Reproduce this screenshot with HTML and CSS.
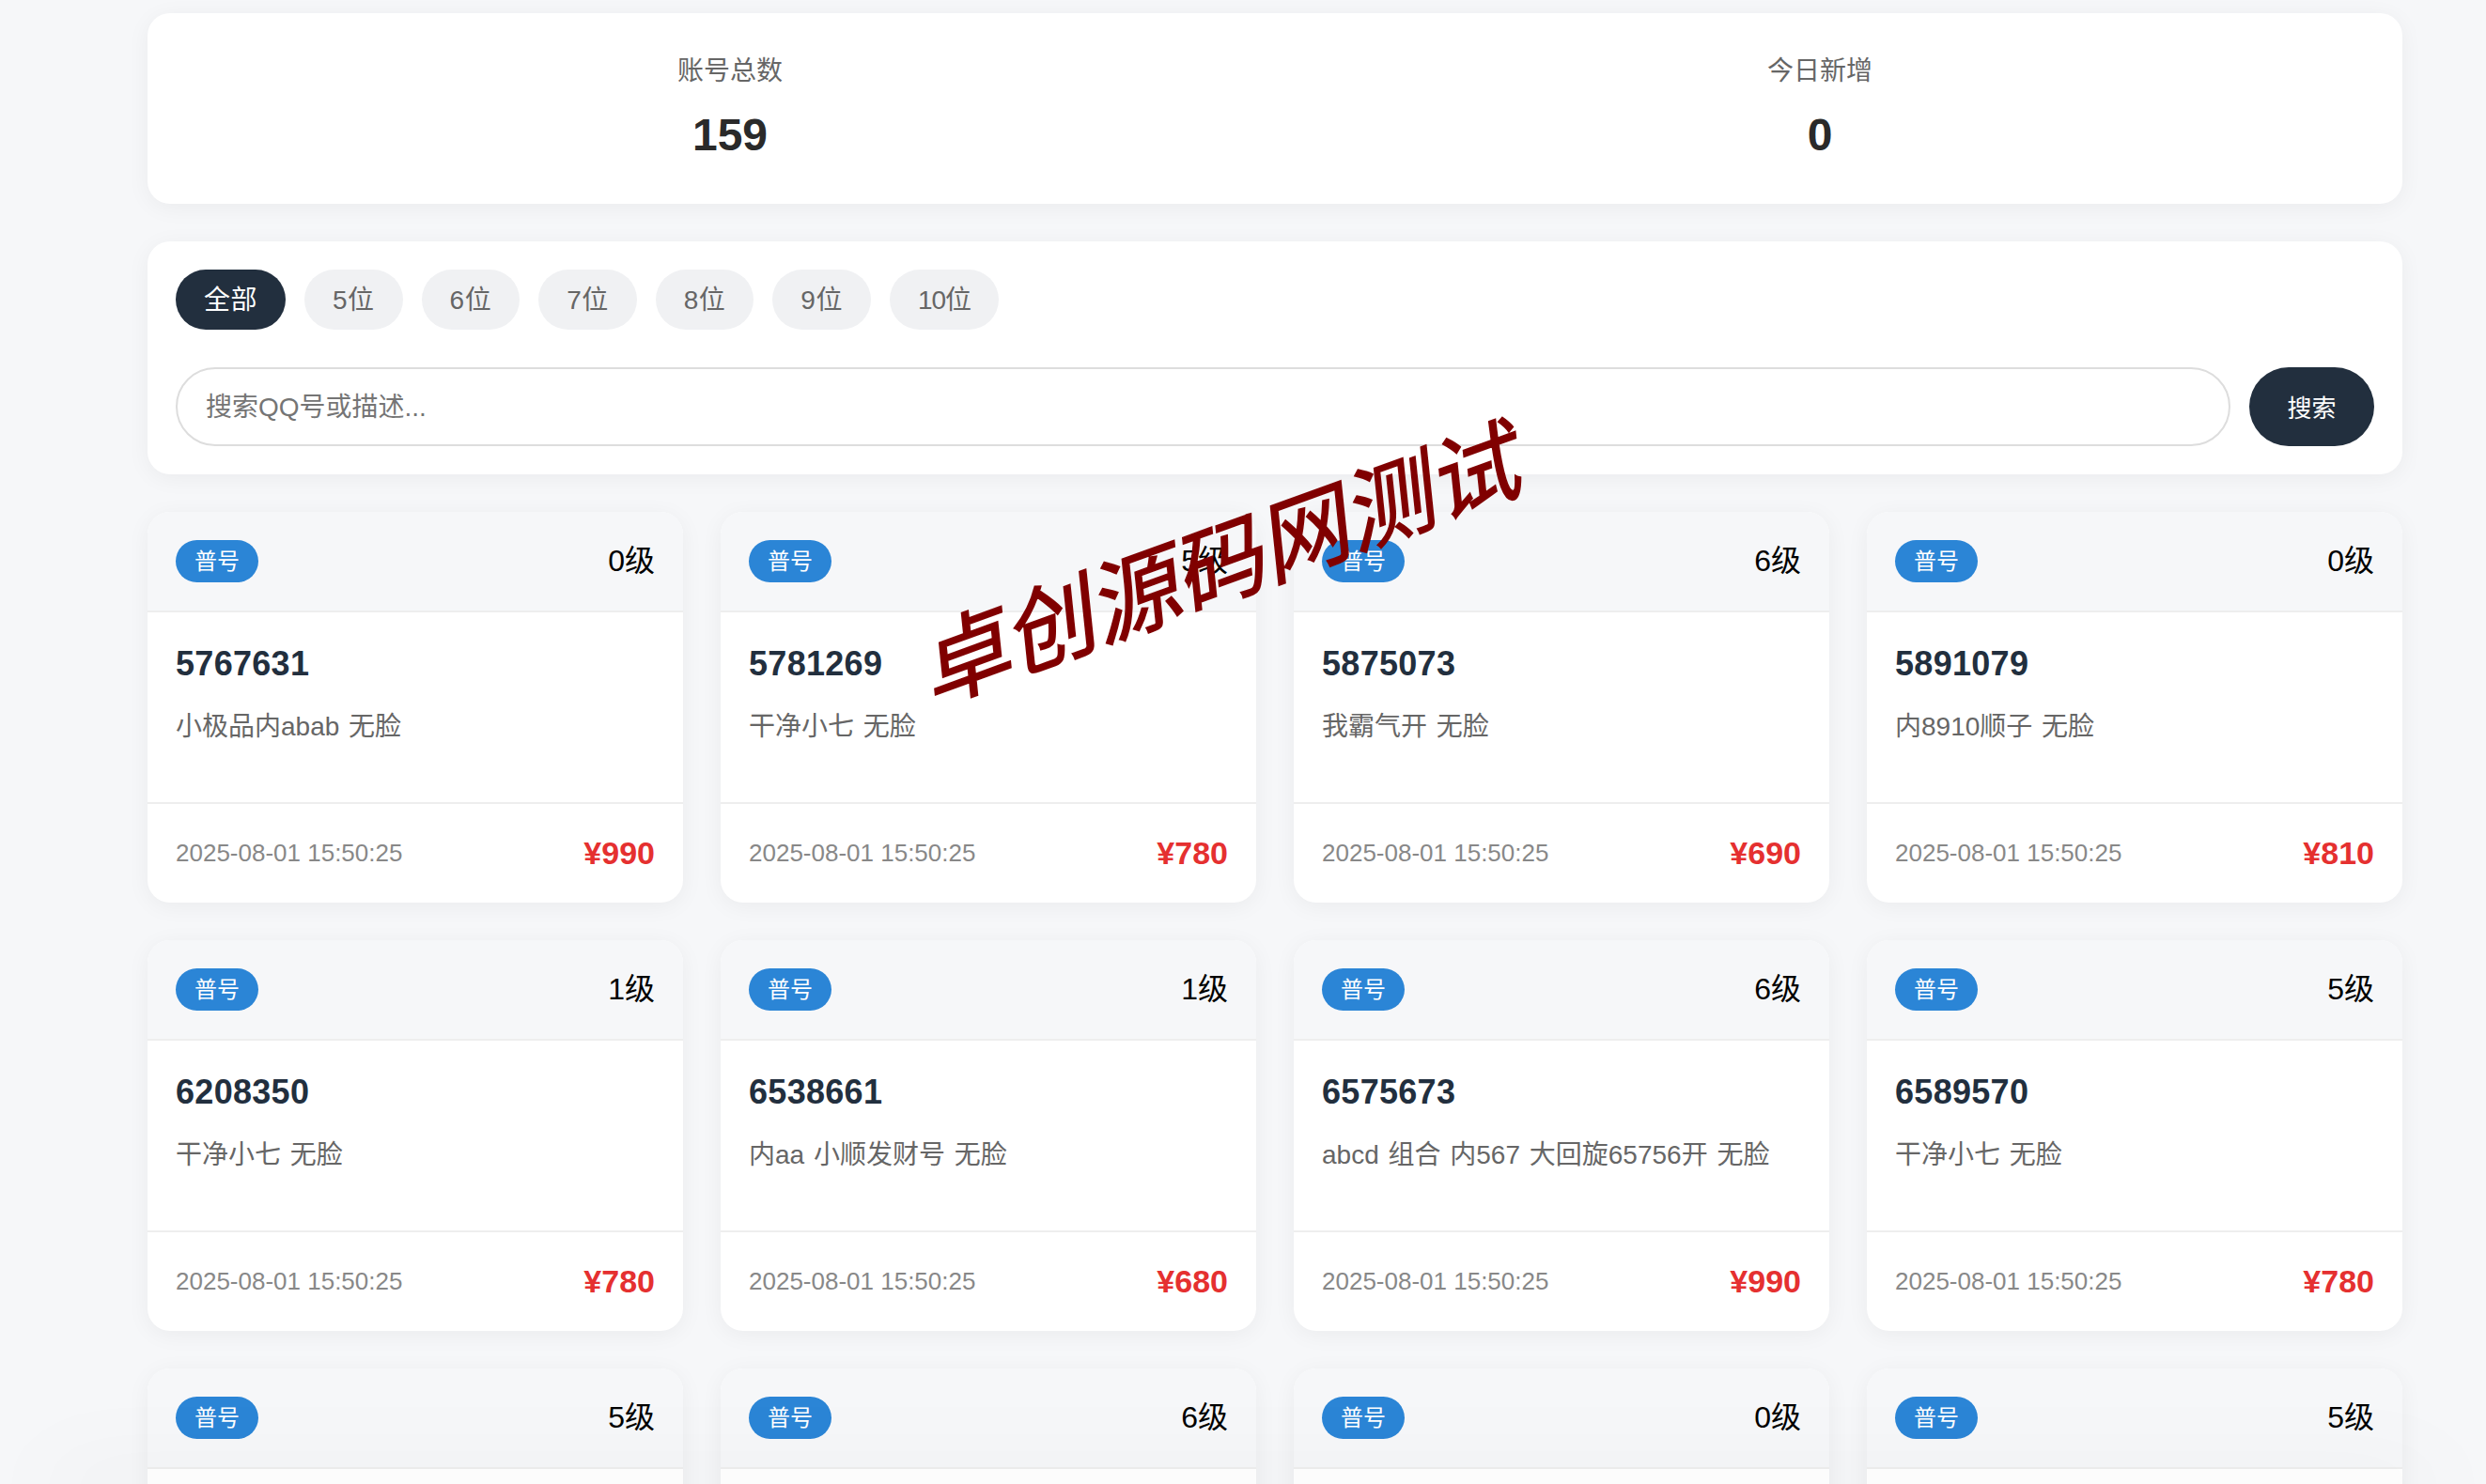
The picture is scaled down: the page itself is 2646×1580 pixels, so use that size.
FILE: index.html
```html
<!DOCTYPE html>
<html lang="zh-CN">
<head>
	<meta charset="utf-8">
	<title>账号列表</title>
	<link rel="stylesheet" href="styles.css">
</head>
<body>
	<div class="container">
		<div class="stats">
			<div class="statItem">
				<div class="statLabel">账号总数</div>
				<div class="statValue">159</div>
			</div>
			<div class="statItem">
				<div class="statLabel">今日新增</div>
				<div class="statValue">0</div>
			</div>
		</div>

		<div class="filters">
			<div class="tabs">
				<a class="tab active">全部</a>
				<a class="tab">5位</a>
				<a class="tab">6位</a>
				<a class="tab">7位</a>
				<a class="tab">8位</a>
				<a class="tab">9位</a>
				<a class="tab">10位</a>
			</div>
			<div class="searchRow">
				<input class="searchInput" type="text" placeholder="搜索QQ号或描述...">
				<button class="searchBtn">搜索</button>
			</div>
		</div>

		<div class="grid">
			<div class="card">
				<div class="cardHead"><span class="badge">普号</span><span class="level">0级</span></div>
				<div class="cardBody"><div class="qq">5767631</div><div class="desc">小极品内abab 无脸</div></div>
				<div class="cardFoot"><span class="date">2025-08-01 15:50:25</span><span class="price">¥990</span></div>
			</div>
			<div class="card">
				<div class="cardHead"><span class="badge">普号</span><span class="level">5级</span></div>
				<div class="cardBody"><div class="qq">5781269</div><div class="desc">干净小七 无脸</div></div>
				<div class="cardFoot"><span class="date">2025-08-01 15:50:25</span><span class="price">¥780</span></div>
			</div>
			<div class="card">
				<div class="cardHead"><span class="badge">普号</span><span class="level">6级</span></div>
				<div class="cardBody"><div class="qq">5875073</div><div class="desc">我霸气开 无脸</div></div>
				<div class="cardFoot"><span class="date">2025-08-01 15:50:25</span><span class="price">¥690</span></div>
			</div>
			<div class="card">
				<div class="cardHead"><span class="badge">普号</span><span class="level">0级</span></div>
				<div class="cardBody"><div class="qq">5891079</div><div class="desc">内8910顺子 无脸</div></div>
				<div class="cardFoot"><span class="date">2025-08-01 15:50:25</span><span class="price">¥810</span></div>
			</div>
			<div class="card">
				<div class="cardHead"><span class="badge">普号</span><span class="level">1级</span></div>
				<div class="cardBody"><div class="qq">6208350</div><div class="desc">干净小七 无脸</div></div>
				<div class="cardFoot"><span class="date">2025-08-01 15:50:25</span><span class="price">¥780</span></div>
			</div>
			<div class="card">
				<div class="cardHead"><span class="badge">普号</span><span class="level">1级</span></div>
				<div class="cardBody"><div class="qq">6538661</div><div class="desc">内aa 小顺发财号 无脸</div></div>
				<div class="cardFoot"><span class="date">2025-08-01 15:50:25</span><span class="price">¥680</span></div>
			</div>
			<div class="card">
				<div class="cardHead"><span class="badge">普号</span><span class="level">6级</span></div>
				<div class="cardBody"><div class="qq">6575673</div><div class="desc">abcd 组合 内567 大回旋65756开 无脸</div></div>
				<div class="cardFoot"><span class="date">2025-08-01 15:50:25</span><span class="price">¥990</span></div>
			</div>
			<div class="card">
				<div class="cardHead"><span class="badge">普号</span><span class="level">5级</span></div>
				<div class="cardBody"><div class="qq">6589570</div><div class="desc">干净小七 无脸</div></div>
				<div class="cardFoot"><span class="date">2025-08-01 15:50:25</span><span class="price">¥780</span></div>
			</div>
			<div class="card">
				<div class="cardHead"><span class="badge">普号</span><span class="level">5级</span></div>
			</div>
			<div class="card">
				<div class="cardHead"><span class="badge">普号</span><span class="level">6级</span></div>
			</div>
			<div class="card">
				<div class="cardHead"><span class="badge">普号</span><span class="level">0级</span></div>
			</div>
			<div class="card">
				<div class="cardHead"><span class="badge">普号</span><span class="level">5级</span></div>
			</div>
		</div>
	</div>

	<div class="watermark">卓创源码网测试</div>
	<div class="bottomShade"></div>
</body>
</html>
```

FILE: styles.css
```css
:root {
	--dark: #222f3e;
	--blue: #2b85d6;
	--red: #e53030;
	--pageBg: #f6f7f9;
	--line: #eeeeee;
	--shadow: 0 4px 24px rgba(0, 0, 0, 0.05);
}

* {
	box-sizing: border-box;
}

html, body {
	height: 1580px;
	overflow: hidden;
}

body {
	margin: 0;
	background-color: var(--pageBg);
	font-family: "Liberation Sans", "Noto Sans CJK SC", sans-serif;
	color: #000;
}

.container {
	width: 2400px;
	margin-left: 157px;
	padding-top: 14px;
}

.stats {
	display: flex;
	justify-content: space-around;
	height: 203px;
	padding: 40px;
	margin-bottom: 40px;
	background: #fff;
	border-radius: 24px;
	box-shadow: var(--shadow);
}

.statItem {
	text-align: center;
}

.statLabel {
	font-size: 28px;
	line-height: 44px;
	color: #666;
	margin-bottom: 16px;
}

.statValue {
	font-size: 48px;
	line-height: 60px;
	font-weight: bold;
	color: #2a2a2a;
}

.filters {
	padding: 30px;
	margin-bottom: 40px;
	background: #fff;
	border-radius: 24px;
	box-shadow: var(--shadow);
}

.tabs {
	display: flex;
	gap: 20px;
	margin-bottom: 40px;
}

.tab {
	height: 64px;
	padding: 0 30px;
	font-size: 28px;
	line-height: 66px;
	letter-spacing: 0.5px;
	color: #666;
	background: #f0f1f3;
	border-radius: 40px;
}

.tab:last-child {
	letter-spacing: -1px;
}

.tab.active {
	color: #fff;
	background: var(--dark);
}

.searchRow {
	display: flex;
	gap: 20px;
}

.searchInput {
	flex: 1;
	height: 84px;
	padding: 2px 30px 0;
	font-family: inherit;
	font-size: 28px;
	border: 2px solid #ddd;
	border-radius: 50px;
	outline: none;
}

.searchInput::placeholder {
	color: #757575;
}

.searchBtn {
	width: 133px;
	height: 84px;
	padding-bottom: 2px;
	font-family: inherit;
	font-size: 26px;
	color: #fff;
	background: var(--dark);
	border: none;
	border-radius: 50px;
}

.grid {
	display: grid;
	grid-template-columns: repeat(4, 1fr);
	gap: 40px;
}

.card {
	height: 416px;
	overflow: hidden;
	background: #fff;
	border-radius: 24px;
	box-shadow: var(--shadow);
}

.cardHead {
	display: flex;
	justify-content: space-between;
	align-items: center;
	padding: 30px;
	background: var(--pageBg);
	border-bottom: 2px solid var(--line);
}

.badge {
	height: 45px;
	padding: 0 20px;
	font-size: 24px;
	line-height: 45px;
	color: #fff;
	background: var(--blue);
	border-radius: 30px;
}

.level {
	font-size: 32px;
	line-height: 45px;
}

.cardBody {
	height: 202px;
	padding: 30px;
}

.qq {
	font-size: 36px;
	line-height: 50px;
	font-weight: bold;
	letter-spacing: 0.3px;
	color: var(--dark);
	margin-bottom: 22px;
}

.desc {
	font-size: 28px;
	line-height: 40px;
	word-spacing: 2px;
	color: #666;
}

.cardFoot {
	display: flex;
	justify-content: space-between;
	align-items: center;
	height: 107px;
	padding: 0 30px;
	border-top: 2px solid var(--line);
}

.date {
	font-size: 26px;
	color: #888;
}

.price {
	font-size: 34px;
	font-weight: bold;
	color: var(--red);
}

/* test stamp laid over the page */
.watermark {
	position: absolute;
	left: 960px;
	top: 549px;
	font-size: 96px;
	line-height: 110px;
	font-style: italic;
	white-space: nowrap;
	color: #800000;
	-webkit-text-stroke: 1.5px #800000;
	transform: rotate(-20deg);
}

/* shadow of the bar sitting just under the window */
.bottomShade {
	position: fixed;
	left: 50px;
	right: 50px;
	bottom: -10px;
	height: 10px;
	box-shadow: 0 0 100px rgba(0, 0, 0, 0.18);
}
```
